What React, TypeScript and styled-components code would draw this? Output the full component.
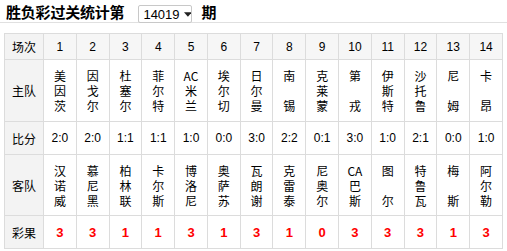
import React from 'react'
import styled, { createGlobalStyle } from 'styled-components'

const GlobalStyle = createGlobalStyle`
    body {
        margin: 0;
        background: #fff;
        font-family: "Liberation Sans", "Noto Sans CJK SC", sans-serif;
        color: #000;
    }
`

const Header = styled.div`
    height: 23px;
    box-sizing: border-box;
    padding: 3px 0 0 6px;
    display: flex;
    align-items: flex-start;
    border-bottom: 1px solid #e0e0e0;
`

const Title = styled.h1`
    margin: 0;
    font-size: 15px;
    line-height: 17px;
    font-weight: bold;
    font-family: "Noto Sans CJK SC", sans-serif;
    letter-spacing: -0.2px;
`

const IssueSelect = styled.div`
    margin: 2px 9px 0 14px;
    width: 54px;
    height: 18px;
    box-sizing: border-box;
    border: 1px solid #c8c8c8;
    border-radius: 2px;
    background: #fff;
    display: flex;
    align-items: center;
    padding-left: 4px;
    gap: 4px;
    font-size: 13px;
    font-family: "Liberation Sans", sans-serif;
`

const Table = styled.table`
    margin: 10px 0 0 4px;
    width: 499px;
    border-collapse: collapse;
    table-layout: fixed;
    font-size: 12px;

    td {
        border: 1px solid #dcdcdc;
        text-align: center;
        vertical-align: middle;
        padding: 0;
    }
`

const Row = styled.tr<{ $h: number; $head?: boolean }>`
    height: ${p => p.$h}px;
    background: ${p => (p.$head ? '#f6f6f6' : '#fff')};
`

const Label = styled.td`
    background: #f3f3f3;
    font-family: "Noto Sans CJK SC", sans-serif;
    font-size: 12px;
`

const Name = styled.td`
    font-family: "Noto Sans CJK SC", sans-serif;
    line-height: 15px;
`

const Result = styled.td`
    color: #ff0000;
    font-weight: bold;
    font-size: 13px;
`

const teams: [string[], string[]][] = [
    [['美', '因', '茨'], ['汉', '诺', '威']],
    [['因', '戈', '尔'], ['慕', '尼', '黑']],
    [['杜', '塞', '尔'], ['柏', '林', '联']],
    [['菲', '尔', '特'], ['卡', '尔', '斯']],
    [['AC', '米', '兰'], ['博', '洛', '尼']],
    [['埃', '尔', '切'], ['奥', '萨', '苏']],
    [['日', '尔', '曼'], ['瓦', '朗', '谢']],
    [['南', '', '锡'], ['克', '雷', '泰']],
    [['克', '莱', '蒙'], ['尼', '奥', '尔']],
    [['第', '', '戎'], ['CA', '巴', '斯']],
    [['伊', '斯', '特'], ['图', '', '尔']],
    [['沙', '托', '鲁'], ['特', '鲁', '瓦']],
    [['尼', '', '姆'], ['梅', '', '斯']],
    [['卡', '', '昂'], ['阿', '尔', '勒']],
]

const scores = ['2:0', '2:0', '1:1', '1:1', '1:0', '0:0', '3:0', '2:2', '0:1', '3:0', '1:0', '2:1', '0:0', '1:0']
const results = ['3', '3', '1', '1', '3', '1', '3', '1', '0', '3', '3', '3', '1', '3']

function Stack({ chars }: { chars: string[] }) {
    return (
        <>
            {chars.map((c, i) => (
                <div key={i}>{c || '\u00a0'}</div>
            ))}
        </>
    )
}

export default function App() {
    return (
        <>
            <GlobalStyle />
            <Header>
                <Title>胜负彩过关统计第</Title>
                <IssueSelect>
                    14019
                    <svg width="9" height="5" viewBox="0 0 9 5">
                        <path d="M0 0 H9 L4.5 5 Z" fill="#222" />
                    </svg>
                </IssueSelect>
                <Title>期</Title>
            </Header>
            <Table>
                <colgroup>
                    <col style={{ width: 39 }} />
                    {scores.map((_, i) => (
                        <col key={i} />
                    ))}
                </colgroup>
                <tbody>
                    <Row $h={26} $head>
                        <Label>场次</Label>
                        {scores.map((_, i) => (
                            <td key={i}>{i + 1}</td>
                        ))}
                    </Row>
                    <Row $h={62}>
                        <Label>主队</Label>
                        {teams.map((t, i) => (
                            <Name key={i}><Stack chars={t[0]} /></Name>
                        ))}
                    </Row>
                    <Row $h={33}>
                        <Label>比分</Label>
                        {scores.map((s, i) => (
                            <td key={i}>{s}</td>
                        ))}
                    </Row>
                    <Row $h={61}>
                        <Label>客队</Label>
                        {teams.map((t, i) => (
                            <Name key={i}><Stack chars={t[1]} /></Name>
                        ))}
                    </Row>
                    <Row $h={33}>
                        <Label>彩果</Label>
                        {results.map((r, i) => (
                            <Result key={i}>{r}</Result>
                        ))}
                    </Row>
                </tbody>
            </Table>
        </>
    )
}
